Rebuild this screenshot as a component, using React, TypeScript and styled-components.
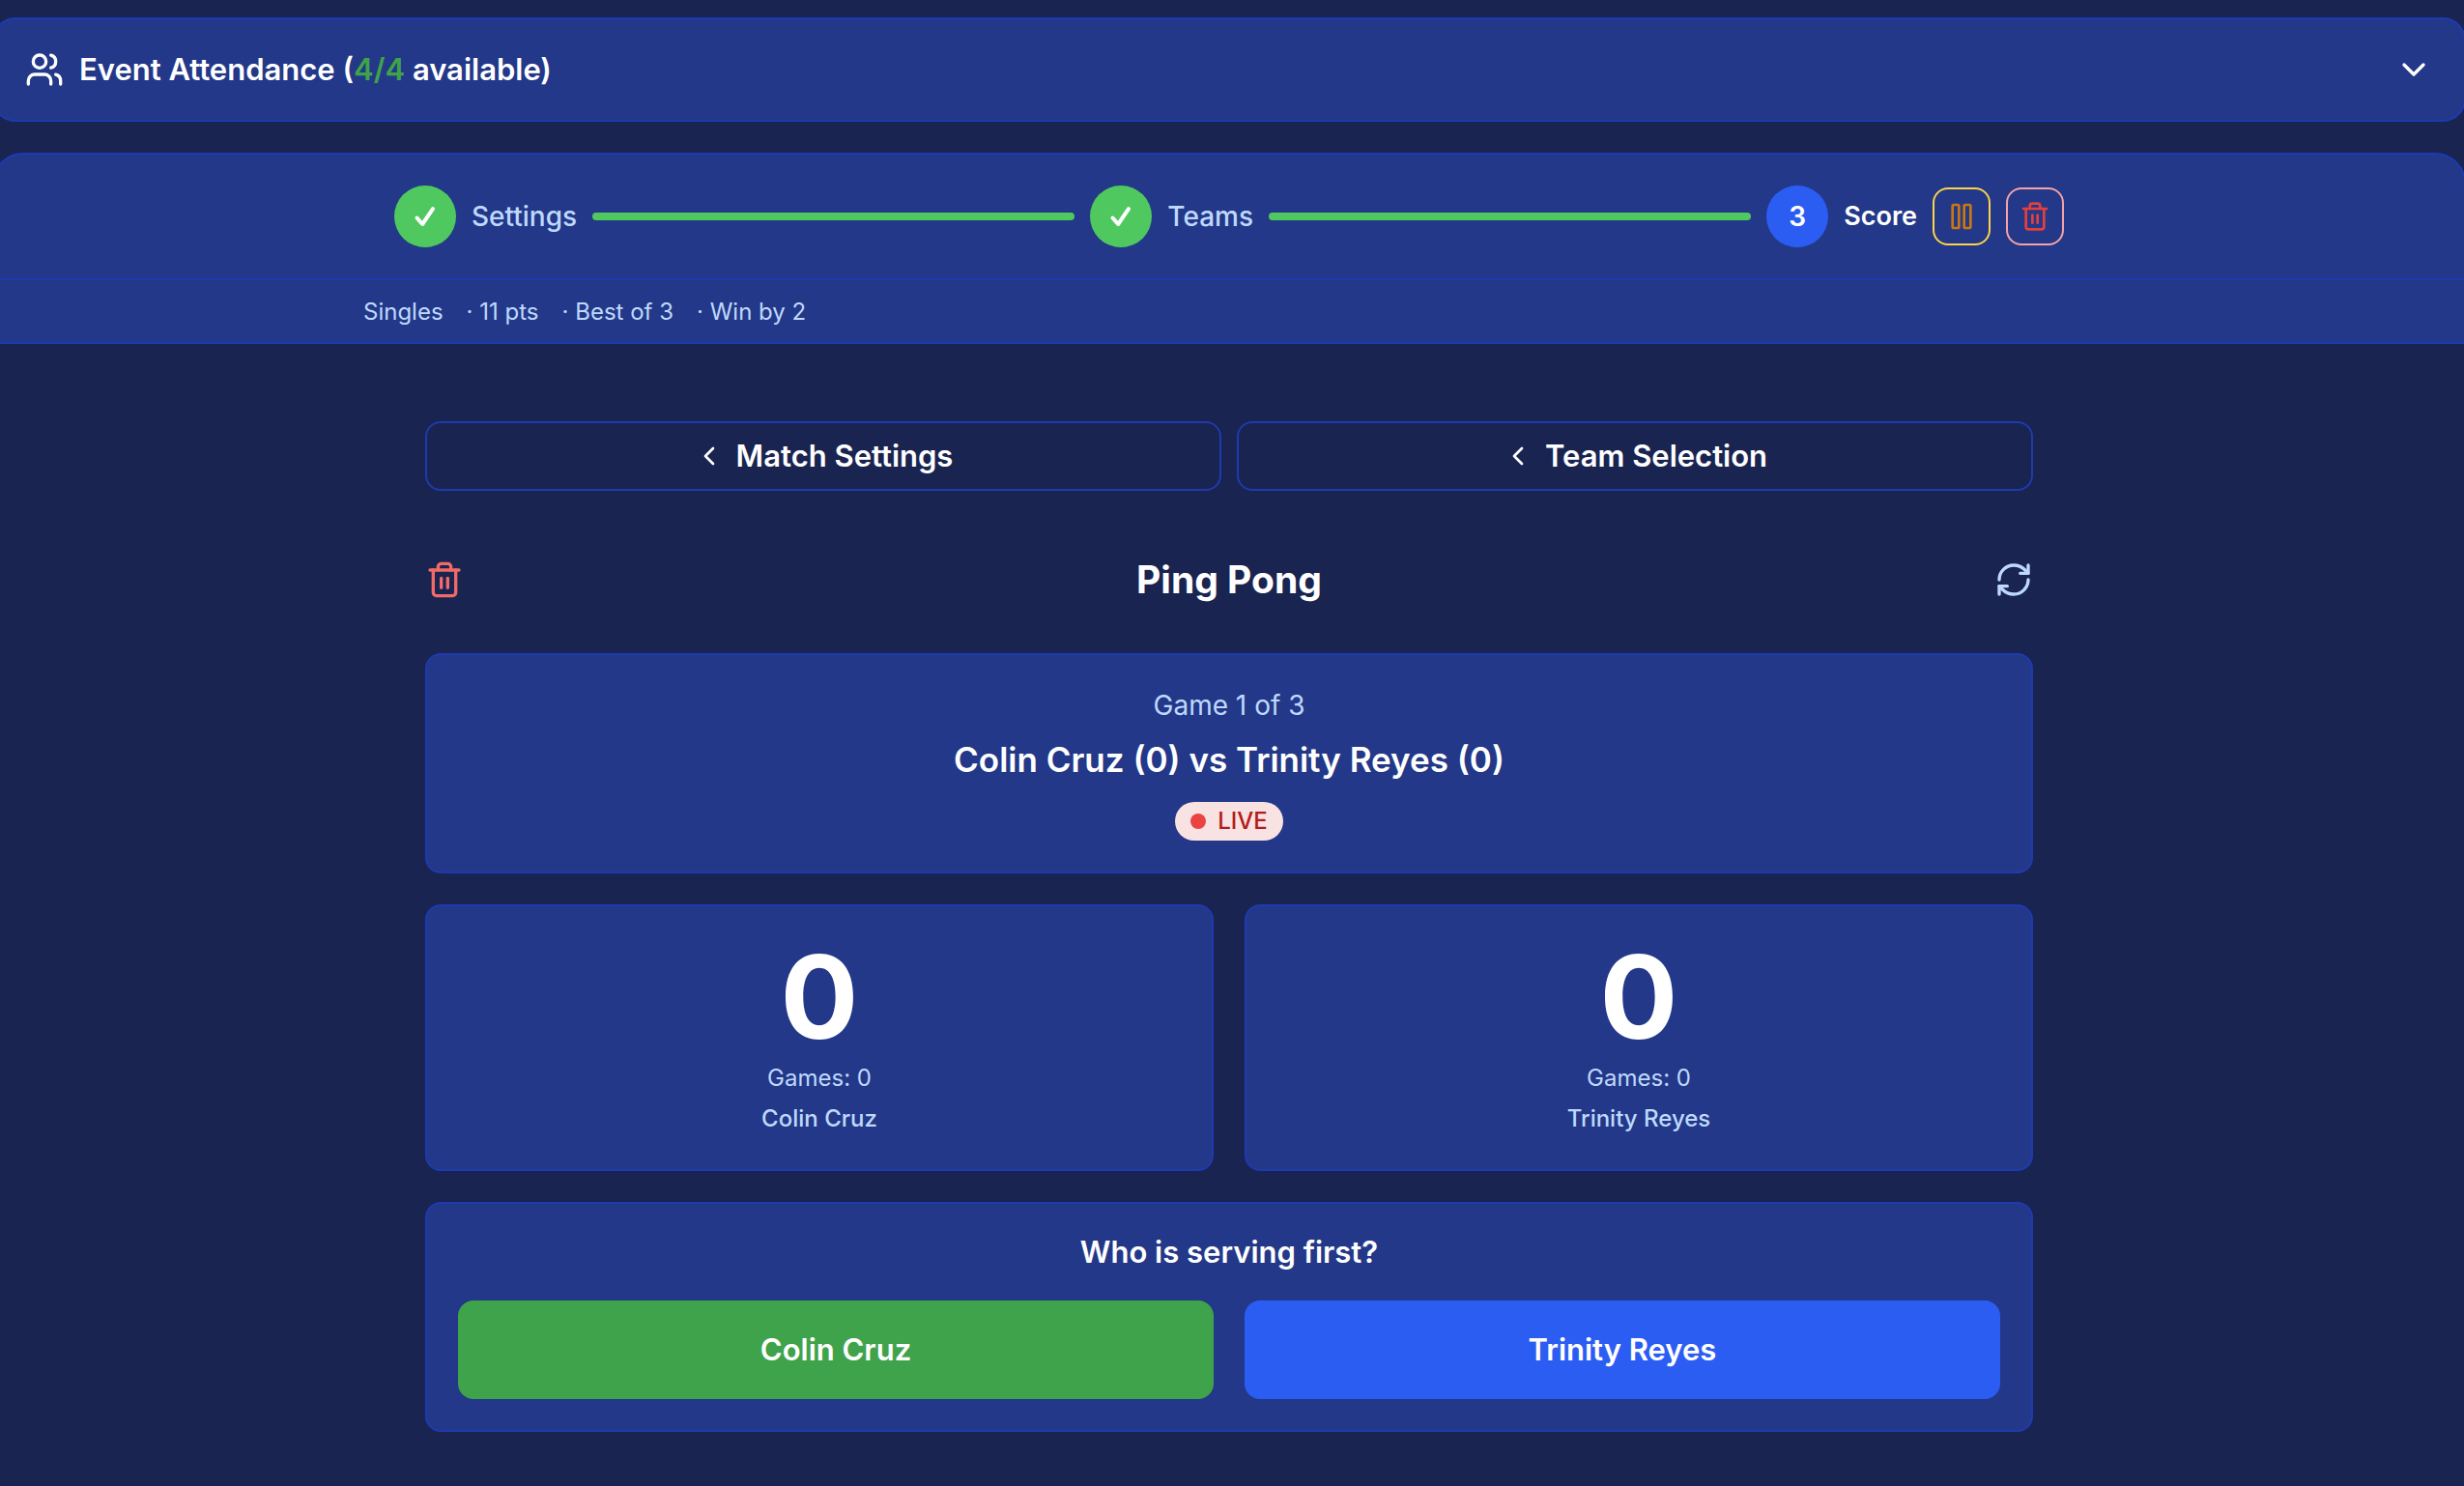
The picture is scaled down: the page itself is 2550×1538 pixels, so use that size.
import React from "react";
import styled, { createGlobalStyle } from "styled-components";
import { Users, ChevronDown, ChevronLeft, Trash2, Pause, RefreshCw } from "lucide-react";

const c = {
  page: "#192451",
  panel: "#233888",
  line: "#1f3ab0",
  soft: "#bfd9fd",
  green: "#50c860",
  deepGreen: "#3fa34b",
  blue: "#2c5df3",
  white: "#ffffff",
};

const Global = createGlobalStyle`
  * { box-sizing: border-box; }
  body {
    margin: 0;
    background: ${c.page};
    color: ${c.white};
    font-family: Inter, "Liberation Sans", sans-serif;
    font-size: 28px;
    line-height: 40px;
    overflow-x: hidden;
  }
  h1, h2, h3, p, ul, ol { margin: 0; padding: 0; }
  ul, ol { list-style: none; }
  button { font: inherit; color: inherit; margin: 0; cursor: pointer; }
`;

const Page = styled.div`
  display: flex;
  flex-direction: column;
  gap: 32px;
  margin: 0 -2px 0 -8px;
  padding-top: 18px;
`;

const Attendance = styled.button`
  display: flex;
  align-items: center;
  gap: 16px;
  height: 108px;
  padding: 0 32px;
  border: 2px solid ${c.line};
  border-radius: 24px;
  background: ${c.panel};
  text-align: left;
`;

const AttendanceTitle = styled.span`
  flex: 1;
  font-size: 31px;
  font-weight: 600;
`;

const Available = styled.span`
  color: ${c.deepGreen};
`;

const Progress = styled.header`
  border: 2px solid ${c.line};
  border-radius: 32px 32px 0 0;
  background: ${c.panel};
`;

const Steps = styled.ol`
  display: flex;
  align-items: center;
  gap: 16px;
  max-width: 1728px;
  height: 128px;
  margin: 0 auto;
`;

const Step = styled.li`
  display: flex;
  align-items: center;
  gap: 16px;
`;

const Circle = styled.span<{ $done?: boolean }>`
  display: grid;
  place-items: center;
  width: 64px;
  height: 64px;
  border-radius: 50%;
  background: ${(p) => (p.$done ? c.green : c.blue)};
  font-weight: 600;
`;

const StepLabel = styled.span<{ $active?: boolean }>`
  color: ${(p) => (p.$active ? c.white : c.soft)};
  font-size: ${(p) => (p.$active ? "27px" : "28px")};
  font-weight: ${(p) => (p.$active ? 600 : 500)};
`;

const Bar = styled.li`
  flex: 1;
  height: 8px;
  border-radius: 4px;
  background: ${c.green};
`;

const SquareButton = styled.button<{ $edge: string; $ink: string }>`
  display: grid;
  place-items: center;
  width: 60px;
  height: 60px;
  padding: 0;
  border: 2px solid ${(p) => p.$edge};
  border-radius: 16px;
  background: transparent;
  color: ${(p) => p.$ink};
`;

const Rules = styled.div`
  border-top: 2px solid ${c.line};
`;

const RuleList = styled.ul`
  display: flex;
  align-items: center;
  gap: 24px;
  max-width: 1792px;
  margin: 0 auto;
  padding: 13px 0 11px;
  color: ${c.soft};
  font-size: 24px;
`;

const Main = styled.main`
  display: flex;
  flex-direction: column;
  gap: 32px;
  width: 100%;
  max-width: 1664px;
  margin: 0 auto;
  padding: 48px 0;
`;

const Nav = styled.nav`
  display: grid;
  grid-template-columns: 1fr 1fr;
  gap: 16px;
`;

const NavButton = styled.button`
  display: flex;
  align-items: center;
  justify-content: center;
  gap: 12px;
  height: 72px;
  padding: 0 16px;
  border: 2px solid ${c.line};
  border-radius: 16px;
  background: transparent;
  font-size: 31px;
  font-weight: 600;
`;

const TitleRow = styled.div`
  display: flex;
  align-items: center;
  justify-content: space-between;
  height: 104px;
  padding-top: 16px;
`;

const Title = styled.h1`
  font-size: 39px;
  font-weight: 700;
`;

const IconButton = styled.button<{ $ink: string }>`
  display: grid;
  place-items: center;
  width: 40px;
  height: 40px;
  padding: 0;
  border: 0;
  background: transparent;
  color: ${(p) => p.$ink};
`;

const Card = styled.section`
  display: flex;
  flex-direction: column;
  align-items: center;
  padding: 32px;
  border: 2px solid ${c.line};
  border-radius: 16px;
  background: ${c.panel};
`;

const GameCount = styled.p`
  color: ${c.soft};
  font-size: 28px;
`;

const Versus = styled.h2`
  margin: 8px 0 16px;
  font-size: 35px;
  line-height: 56px;
  font-weight: 600;
`;

const Live = styled.span`
  display: flex;
  align-items: center;
  gap: 12px;
  height: 40px;
  padding: 0 16px;
  border-radius: 20px;
  background: #f9e3e2;
  color: #b31b1b;
  font-size: 24px;
  font-weight: 500;
`;

const Dot = styled.span`
  width: 16px;
  height: 16px;
  border-radius: 50%;
  background: #e94442;
`;

const Pair = styled.div`
  display: grid;
  grid-template-columns: 1fr 1fr;
  gap: 32px;
  width: 100%;
`;

const Score = styled.strong`
  font-size: 120px;
  line-height: 124px;
  font-weight: 700;
`;

const Small = styled.p<{ $strong?: boolean }>`
  margin-top: 2px;
  color: ${c.soft};
  font-size: 24px;
  line-height: 40px;
  font-weight: ${(p) => (p.$strong ? 500 : 400)};
`;

const Question = styled.h3`
  margin-bottom: 32px;
  font-size: 31px;
  line-height: 36px;
  font-weight: 600;
`;

const Serve = styled.button<{ $bg: string }>`
  height: 102px;
  border: 0;
  border-radius: 16px;
  background: ${(p) => p.$bg};
  font-size: 31px;
  font-weight: 600;
`;

const CheckMark = () => (
  <svg width="32" height="32" viewBox="0 0 32 32" fill="none" stroke="currentColor" strokeWidth="4" strokeLinecap="round" strokeLinejoin="round" aria-hidden="true">
    <path d="M7.5 17.5 13.2 24 24 8.2" />
  </svg>
);

const players = ["Colin Cruz", "Trinity Reyes"];

export default function App() {
  return (
    <>
      <Global />
      <Page>
        <Attendance type="button" aria-expanded={false}>
          <Users size={40} />
          <AttendanceTitle>
            Event Attendance (<Available>4/4</Available> available)
          </AttendanceTitle>
          <ChevronDown size={40} />
        </Attendance>

        <Progress>
          <Steps>
            <Step>
              <Circle $done><CheckMark /></Circle>
              <StepLabel>Settings</StepLabel>
            </Step>
            <Bar aria-hidden="true" />
            <Step>
              <Circle $done><CheckMark /></Circle>
              <StepLabel>Teams</StepLabel>
            </Step>
            <Bar aria-hidden="true" />
            <Step aria-current="step">
              <Circle>3</Circle>
              <StepLabel $active>Score</StepLabel>
              <SquareButton type="button" aria-label="Pause match" $edge="#fbd34b" $ink="#c9770f">
                <Pause size={32} />
              </SquareButton>
              <SquareButton type="button" aria-label="Delete match" $edge="#f5a3a6" $ink="#e63f3c">
                <Trash2 size={32} />
              </SquareButton>
            </Step>
          </Steps>
          <Rules>
            <RuleList>
              <li>Singles</li>
              <li>· 11 pts</li>
              <li>· Best of 3</li>
              <li>· Win by 2</li>
            </RuleList>
          </Rules>
        </Progress>

        <Main>
          <Nav>
            <NavButton type="button"><ChevronLeft size={32} />Match Settings</NavButton>
            <NavButton type="button"><ChevronLeft size={32} />Team Selection</NavButton>
          </Nav>

          <TitleRow>
            <IconButton type="button" aria-label="Remove" $ink="#f06a67"><Trash2 size={40} /></IconButton>
            <Title>Ping Pong</Title>
            <IconButton type="button" aria-label="Refresh" $ink={c.soft}><RefreshCw size={40} /></IconButton>
          </TitleRow>

          <Card>
            <GameCount>Game 1 of 3</GameCount>
            <Versus>Colin Cruz (0) vs Trinity Reyes (0)</Versus>
            <Live><Dot />LIVE</Live>
          </Card>

          <Pair>
            {players.map((name) => (
              <Card key={name}>
                <Score>0</Score>
                <Small>Games: 0</Small>
                <Small $strong>{name}</Small>
              </Card>
            ))}
          </Pair>

          <Card>
            <Question>Who is serving first?</Question>
            <Pair>
              <Serve type="button" $bg={c.deepGreen}>{players[0]}</Serve>
              <Serve type="button" $bg={c.blue}>{players[1]}</Serve>
            </Pair>
          </Card>
        </Main>
      </Page>
    </>
  );
}
